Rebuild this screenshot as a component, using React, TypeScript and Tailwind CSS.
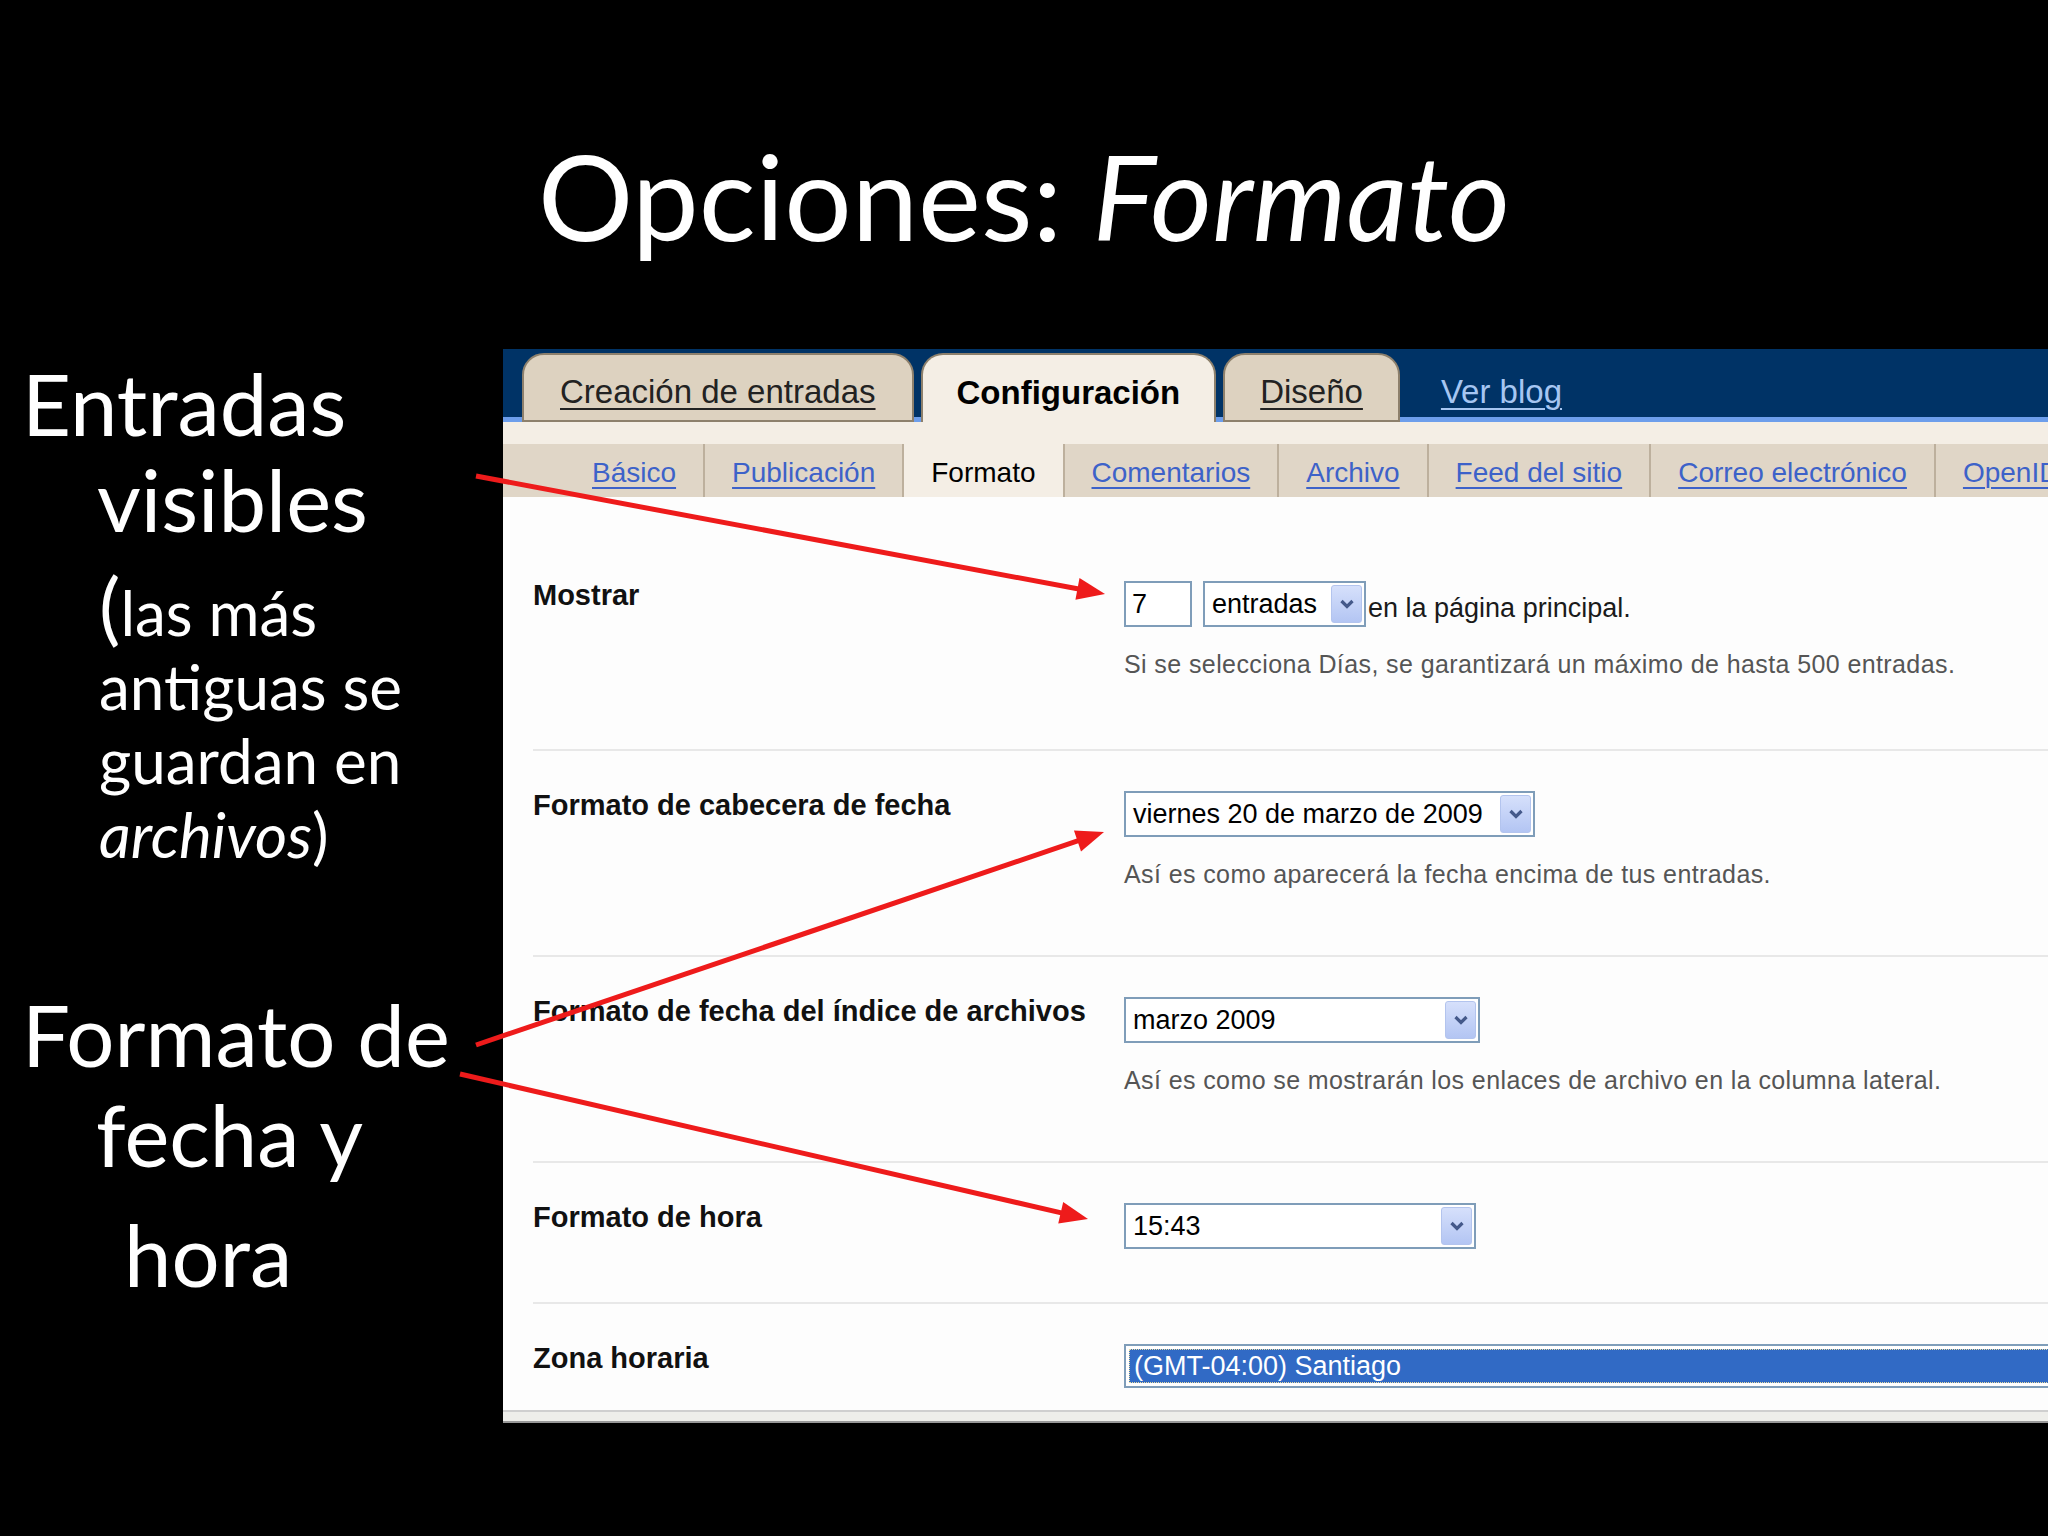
import React from 'react';

// Slide: "Opciones: Formato" with a Blogger settings screenshot and red callout arrows

const SUBTABS = [
  'Básico',
  'Publicación',
  'Formato',
  'Comentarios',
  'Archivo',
  'Feed del sitio',
  'Correo electrónico',
  'OpenID',
];

function Chevron() {
  return (
    <svg width="16" height="12" viewBox="0 0 16 12">
      <polyline points="2.5,3 8,8.5 13.5,3" fill="none" stroke="#44598a" strokeWidth="3.2" />
    </svg>
  );
}

function Select({ value, className }: { value: string; className: string }) {
  return (
    <div className={`flex h-[46px] shrink-0 items-center border-2 border-[#7f9db9] bg-white ${className}`}>
      <span className="flex-1 whitespace-nowrap pl-[7px] text-[27px] leading-[40px] text-black">{value}</span>
      <span className="mr-[2px] flex h-[38px] w-[31px] items-center justify-center rounded-[3px] border border-[#b3c4ee] bg-gradient-to-b from-[#d6e0fb] to-[#b3c5f3]">
        <Chevron />
      </span>
    </div>
  );
}

function Help({ children }: { children: React.ReactNode }) {
  return (
    <div className="mt-[22px] whitespace-nowrap text-[25px] leading-[30px] tracking-[0.4px] text-[#555]">
      {children}
    </div>
  );
}

function Row({
  label,
  className,
  children,
}: {
  label: string;
  className: string;
  children: React.ReactNode;
}) {
  return (
    <div className={`flex ${className}`}>
      <div className="w-[591px] shrink-0 whitespace-nowrap text-[29px] font-bold leading-[36px] text-[#111]">
        {label}
      </div>
      <div className="min-w-0 flex-1 pt-[4px]">{children}</div>
    </div>
  );
}

function Arrow({ x1, y1, x2, y2 }: { x1: number; y1: number; x2: number; y2: number }) {
  const dx = x2 - x1;
  const dy = y2 - y1;
  const len = Math.hypot(dx, dy);
  const ux = dx / len;
  const uy = dy / len;
  const head = 28;
  const half = 11;
  const bx = x2 - ux * head;
  const by = y2 - uy * head;
  const pts = `${x2},${y2} ${bx - uy * half},${by + ux * half} ${bx + uy * half},${by - ux * half}`;
  return (
    <g>
      <line x1={x1} y1={y1} x2={bx + ux * 4} y2={by + uy * 4} stroke="#ee1b1b" strokeWidth={5} />
      <polygon points={pts} fill="#ee1b1b" />
    </g>
  );
}

function Panel() {
  return (
    <div className="flex h-[1074px] w-[1545px] shrink-0 flex-col overflow-hidden bg-[#fdfdfd] font-['Liberation_Sans',Arial,sans-serif] text-black">
      {/* main tabs */}
      <div className="flex h-[73px] shrink-0 items-end gap-[7px] border-b-[5px] border-[#6d9eeb] bg-[#003366] pl-[19px]">
        <div className="mb-[-5px] flex h-[69px] shrink-0 items-center rounded-t-[22px] border-2 border-[#8d806c] bg-[#ddd2c0] px-[36px] pt-[8px] text-[33px] text-[#222]">
          <span className="whitespace-nowrap underline decoration-[2px] underline-offset-[5px]">Creación de entradas</span>
        </div>
        <div className="mb-[-5px] flex h-[69px] shrink-0 items-center rounded-t-[22px] border-2 border-b-0 border-[#8d806c] bg-[#f4eee5] px-[34px] pt-[8px] text-[33px] font-bold text-black">
          <span className="whitespace-nowrap">Configuración</span>
        </div>
        <div className="mb-[-5px] flex h-[69px] shrink-0 items-center rounded-t-[22px] border-2 border-[#8d806c] bg-[#ddd2c0] px-[35px] pt-[8px] text-[33px] text-[#222]">
          <span className="whitespace-nowrap underline decoration-[2px] underline-offset-[5px]">Diseño</span>
        </div>
        <div className="mb-[-5px] ml-[34px] flex h-[69px] shrink-0 items-center pt-[8px] text-[33px] text-[#a6c6f2]">
          <span className="whitespace-nowrap underline decoration-[2px] underline-offset-[5px]">Ver blog</span>
        </div>
      </div>

      <div className="h-[22px] shrink-0 bg-[#f4eee5]" />

      {/* sub tabs */}
      <div className="flex h-[53px] shrink-0 bg-[#e0d6c7] pl-[62px] text-[28px]">
        {SUBTABS.map((t) =>
          t === 'Formato' ? (
            <div key={t} className="flex shrink-0 items-center whitespace-nowrap border-r-2 border-[#bdb09d] bg-[#f4eee5] px-[27px] pt-[4px] text-black">
              {t}
            </div>
          ) : (
            <div key={t} className="flex shrink-0 items-center whitespace-nowrap border-r-2 border-[#bdb09d] px-[27px] pt-[4px] text-[#3d62c9]">
              <span className="underline decoration-[2px] underline-offset-[5px]">{t}</span>
            </div>
          ),
        )}
      </div>

      {/* settings */}
      <div className="flex-1 pl-[30px]">
        <Row label="Mostrar" className="pb-[70px] pt-[80px]">
          <div className="flex h-[46px] items-center">
            <div className="flex h-[46px] w-[68px] shrink-0 items-center border-2 border-[#7f9db9] bg-white pl-[6px] text-[27px]">
              7
            </div>
            <Select value="entradas" className="ml-[11px] w-[163px]" />
            <span className="whitespace-nowrap pl-[2px] pt-[8px] text-[27px] text-[#1a1a1a]">en la página principal.</span>
          </div>
          <Help>Si se selecciona Días, se garantizará un máximo de hasta 500 entradas.</Help>
        </Row>

        <Row label="Formato de cabecera de fecha" className="border-t-2 border-[#e8e8e8] pb-[66px] pt-[36px]">
          <Select value="viernes 20 de marzo de 2009" className="w-[411px]" />
          <Help>Así es como aparecerá la fecha encima de tus entradas.</Help>
        </Row>

        <Row label="Formato de fecha del índice de archivos" className="border-t-2 border-[#e8e8e8] pb-[66px] pt-[36px]">
          <Select value="marzo 2009" className="w-[356px]" />
          <Help>Así es como se mostrarán los enlaces de archivo en la columna lateral.</Help>
        </Row>

        <Row label="Formato de hora" className="border-t-2 border-[#e8e8e8] pb-[53px] pt-[36px]">
          <Select value="15:43" className="w-[352px]" />
        </Row>

        <Row label="Zona horaria" className="border-t-2 border-[#e8e8e8] pt-[36px]">
          <div className="flex h-[44px] w-[1000px] border-2 border-[#7f9db9] bg-white p-[3px]">
            <div className="flex-1 border border-dotted border-[#e8dca0] bg-[#316ac5] pl-[4px] text-[27px] leading-[32px] text-white">
              (GMT-04:00) Santiago
            </div>
          </div>
        </Row>
      </div>

      <div className="h-[13px] shrink-0 border-y-2 border-t-[#cfcfcf] border-b-[#999] bg-[#eeeeea]" />
    </div>
  );
}

export default function App() {
  return (
    <div className="relative h-[1536px] w-[2048px] overflow-hidden bg-black font-['Lato',sans-serif] text-white">
      <div className="h-[349px] whitespace-nowrap pt-[126px] text-center text-[119px] leading-[138px]">
        Opciones: <em className="italic">Formato</em>
      </div>

      <div className="flex">
        <div className="w-[503px] shrink-0">
          <div className="pt-[6px] text-[85px]">
            <div className="h-[96px] whitespace-nowrap pl-[22px] leading-[96px]">Entradas</div>
            <div className="h-[96px] whitespace-nowrap pl-[97px] leading-[96px]">visibles</div>
          </div>
          <div className="mt-[28px] pl-[99px] text-[62px] leading-[74px]">
            <div className="h-[74px] whitespace-nowrap">
              <span className="text-[80px] leading-[60px]">(</span>las más
            </div>
            <div className="h-[74px] whitespace-nowrap">antiguas se</div>
            <div className="h-[74px] whitespace-nowrap">guardan en</div>
            <div className="h-[74px] whitespace-nowrap">
              <em className="italic">archivos</em>)
            </div>
          </div>
          <div className="mt-[113px] text-[85px]">
            <div className="h-[100px] whitespace-nowrap pl-[22px] leading-[100px]">Formato de</div>
            <div className="h-[100px] whitespace-nowrap pl-[96px] leading-[100px]">fecha y</div>
            <div className="h-[140px] whitespace-nowrap pl-[124px] leading-[140px]">hora</div>
          </div>
        </div>
        <Panel />
      </div>

      {/* callout arrows */}
      <svg className="pointer-events-none absolute left-0 top-0" width={2048} height={1536}>
        <Arrow x1={476} y1={476} x2={1105} y2={594} />
        <Arrow x1={476} y1={1045} x2={1104} y2={832} />
        <Arrow x1={460} y1={1074} x2={1088} y2={1219} />
      </svg>
    </div>
  );
}
